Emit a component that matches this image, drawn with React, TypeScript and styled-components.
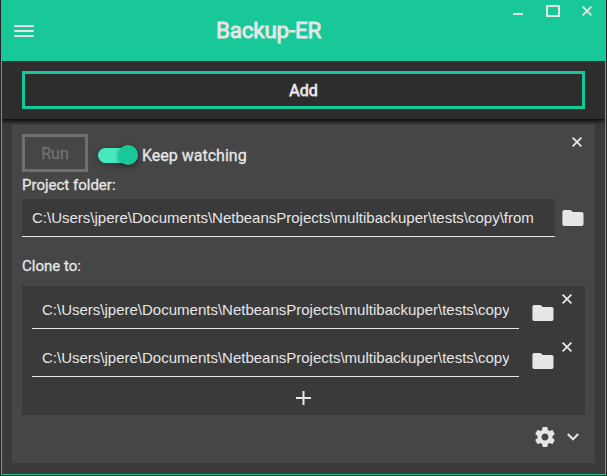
import React from "react";
import styled, { createGlobalStyle } from "styled-components";

const green = "#19c898";
const light = "#e6e6e6";

const Global = createGlobalStyle`
  * { box-sizing: border-box; }
  body { margin: 0; background: #232427; font-family: Roboto, sans-serif; color: ${light}; overflow: hidden; }
  button { font: inherit; color: inherit; background: none; border: 0; padding: 0; }
  svg { display: block; }
`;

const Frame = styled.div`
  width: 605px;
  height: 475px;
  margin-left: 1px;
  border: 1px solid ${green};
  border-top: 0;
  background: #3a3a3a;
  display: flex;
  flex-direction: column;
`;

const Header = styled.header`
  height: 61px;
  flex: none;
  background: ${green};
  display: grid;
  grid-template-columns: 104px 1fr 174px;
`;

const MenuButton = styled.button`
  width: 20px;
  height: 12px;
  margin: 25px 0 0 12px;
`;

const Title = styled.h1`
  margin: 17px 0 0 0;
  font-size: 22.4px;
  letter-spacing: -0.2px;
  line-height: 27px;
  font-weight: 400;
  -webkit-text-stroke: 0.9px ${light};
  text-align: center;
`;

const WindowControls = styled.div`
  display: flex;
  justify-content: flex-end;
  gap: 22px;
  padding: 5px 13px 0 0;
  height: 17px;
`;

const Minimize = styled.button`
  width: 10px;
  height: 2px;
  margin: 8px 1px 0 0;
  background: ${light};
`;

const Maximize = styled.button`
  width: 14px;
  height: 12px;
  border: 2px solid ${light};
`;

const CloseButton = styled.button`
  width: 10px;
  height: 10px;
  flex: none;
  margin-top: 1px;
`;

const Toolbar = styled.div`
  height: 58px;
  flex: none;
  padding: 10px 20px;
  background: #2d2d2d;
  box-shadow: 0 2px 4px rgba(0, 0, 0, 0.9);
  clip-path: inset(0 0 -8px 0);
  z-index: 1;
`;

const AddButton = styled.button`
  display: block;
  width: 563px;
  height: 38px;
  border: 3px solid ${green};
  padding-top: 1px;
  font-size: 16px;
  line-height: 31px;
  -webkit-text-stroke: 0.75px ${light};
`;

const Card = styled.section`
  width: 583px;
  height: 339px;
  margin: 5px 0 0 10px;
  padding: 10px;
  background: #464646;
  display: flex;
  flex-direction: column;
`;

const TopRow = styled.div`
  display: flex;
  height: 38px;
  flex: none;
`;

const RunButton = styled.button`
  width: 66px;
  height: 38px;
  border: 3px solid #707070;
  color: #707070;
  padding-top: 2px;
  font-size: 16px;
  line-height: 30px;
  -webkit-text-stroke: 0.35px #707070;
`;

const Switch = styled.div`
  width: 40px;
  height: 20px;
  margin: 11px 4px 0 10px;
  display: flex;
  align-items: center;
`;

const Track = styled.div`
  width: 38px;
  height: 15px;
  border-radius: 8px;
  background: #46eabd;
  box-shadow: 0 2px 6px rgba(0, 0, 0, 0.3);
`;

const Knob = styled.div`
  width: 20px;
  height: 20px;
  flex: none;
  margin-left: -18px;
  border-radius: 50%;
  background: ${green};
  box-shadow: 0 2px 5px rgba(0, 0, 0, 0.35);
`;

const SwitchLabel = styled.span`
  margin-top: 12px;
  font-size: 16px;
  line-height: 20px;
  -webkit-text-stroke: 0.3px ${light};
`;

const CardClose = styled(CloseButton)`
  margin: 3px 3px 0 auto;
`;

const Label = styled.div<{ $gap: number }>`
  margin-top: ${(p) => p.$gap}px;
  height: 20px;
  flex: none;
  font-size: 15px;
  line-height: 20px;
  -webkit-text-stroke: 0.3px ${light};
`;

const SourceRow = styled.div`
  display: flex;
  gap: 7px;
  margin: 4px 1px 0 0;
  height: 38px;
  flex: none;
`;

const PathInput = styled.input`
  flex: 1;
  min-width: 0;
  height: 38px;
  border: 0;
  border-bottom: 1px solid ${light};
  border-radius: 0;
  outline: 0;
  padding: 0 10px;
  background: #3a3a3a;
  color: ${light};
  font: 15px "Liberation Sans", Arial, sans-serif;
`;

const FolderButton = styled.button<{ $top: number }>`
  width: 22px;
  height: 16px;
  flex: none;
  margin-top: ${(p) => p.$top}px;
`;

const Targets = styled.div`
  height: 129px;
  flex: none;
  margin-top: 10px;
  padding: 5px 13px 0 10px;
  background: #3a3a3a;
`;

const TargetRow = styled.div`
  display: flex;
  height: 48px;
`;

const TargetTools = styled.div`
  display: flex;
  gap: 8px;
  margin-left: 13px;
  padding-top: 2px;
`;

const AddTarget = styled.button`
  display: block;
  width: 15px;
  height: 15px;
  margin: 4px 0 0 264px;
`;

const Footer = styled.div`
  display: flex;
  justify-content: flex-end;
  align-items: center;
  gap: 12px;
  height: 20px;
  margin: 12px 6px 0 0;
`;

const Cross = () => (
  <svg width="10" height="10" viewBox="0 0 10 10">
    <path d="M.6.6 9.4 9.4M9.4.6.6 9.4" stroke={light} strokeWidth="1.8" />
  </svg>
);

const Folder = () => (
  <svg width="22" height="16" viewBox="0 0 22 16">
    <path
      d="M2.3 0H8q.7 0 1.2.5L10.7 2h9q1.8 0 1.8 1.8v10.4q0 1.8-1.8 1.8H2.2Q.4 16 .4 14.2V1.9Q.4 0 2.3 0Z"
      fill={light}
    />
  </svg>
);

const Gear = () => (
  <svg width="20" height="20" viewBox="2 2 20 20">
    <path
      fill={light}
      d="M19.43 12.98c.04-.32.07-.64.07-.98s-.03-.66-.07-.98l2.11-1.65c.19-.15.24-.42.12-.64l-2-3.46c-.12-.22-.39-.3-.61-.22l-2.49 1c-.52-.4-1.08-.73-1.69-.98l-.38-2.65C14.46 2.18 14.25 2 14 2h-4c-.25 0-.46.18-.49.42l-.38 2.65c-.61.25-1.17.59-1.69.98l-2.49-1c-.23-.09-.49 0-.61.22l-2 3.46c-.13.22-.07.49.12.64l2.11 1.65c-.04.32-.07.65-.07.98s.03.66.07.98l-2.11 1.65c-.19.15-.24.42-.12.64l2 3.46c.12.22.39.3.61.22l2.49-1c.52.4 1.08.73 1.69.98l.38 2.65c.03.24.24.42.49.42h4c.25 0 .46-.18.49-.42l.38-2.65c.61-.25 1.17-.59 1.69-.98l2.49 1c.23.09.49 0 .61-.22l2-3.46c.12-.22.07-.49-.12-.64l-2.11-1.65zM12 15.5c-1.93 0-3.5-1.57-3.5-3.5s1.57-3.5 3.5-3.5 3.5 1.57 3.5 3.5-1.57 3.5-3.5 3.5z"
    />
  </svg>
);

const targets = [
  "C:\\Users\\jpere\\Documents\\NetbeansProjects\\multibackuper\\tests\\copy",
  "C:\\Users\\jpere\\Documents\\NetbeansProjects\\multibackuper\\tests\\copy",
];

export default function App() {
  return (
    <>
      <Global />
      <Frame>
        <Header>
          <MenuButton aria-label="Menu">
            <svg width="20" height="12" viewBox="0 0 20 12">
              <path d="M.3 1h19.4M.3 6h19.4M.3 11h19.4" stroke={light} strokeWidth="2" />
            </svg>
          </MenuButton>
          <Title>Backup-ER</Title>
          <WindowControls>
            <Minimize aria-label="Minimize" />
            <Maximize aria-label="Maximize" />
            <CloseButton aria-label="Close"><Cross /></CloseButton>
          </WindowControls>
        </Header>
        <Toolbar>
          <AddButton>Add</AddButton>
        </Toolbar>
        <Card>
          <TopRow>
            <RunButton>Run</RunButton>
            <Switch role="switch" aria-checked="true">
              <Track />
              <Knob />
            </Switch>
            <SwitchLabel>Keep watching</SwitchLabel>
            <CardClose aria-label="Remove project"><Cross /></CardClose>
          </TopRow>
          <Label $gap={3}>Project folder:</Label>
          <SourceRow>
            <PathInput readOnly value={"C:\\Users\\jpere\\Documents\\NetbeansProjects\\multibackuper\\tests\\copy\\from"} />
            <FolderButton $top={11} aria-label="Choose folder"><Folder /></FolderButton>
          </SourceRow>
          <Label $gap={19}>Clone to:</Label>
          <Targets>
            {targets.map((path, i) => (
              <TargetRow key={i}>
                <PathInput readOnly value={path} />
                <TargetTools>
                  <FolderButton $top={12} aria-label="Choose folder"><Folder /></FolderButton>
                  <CloseButton aria-label="Remove target"><Cross /></CloseButton>
                </TargetTools>
              </TargetRow>
            ))}
            <AddTarget aria-label="Add target">
              <svg width="15" height="15" viewBox="0 0 15 15">
                <path d="M0 7h15M7.5 0v14" stroke={light} strokeWidth="2" />
              </svg>
            </AddTarget>
          </Targets>
          <Footer>
            <Gear />
            <svg width="12" height="8" viewBox="0 0 12 8">
              <path d="m.8 1 5.2 5.2L11.2 1" fill="none" stroke={light} strokeWidth="2.1" />
            </svg>
          </Footer>
        </Card>
      </Frame>
    </>
  );
}
